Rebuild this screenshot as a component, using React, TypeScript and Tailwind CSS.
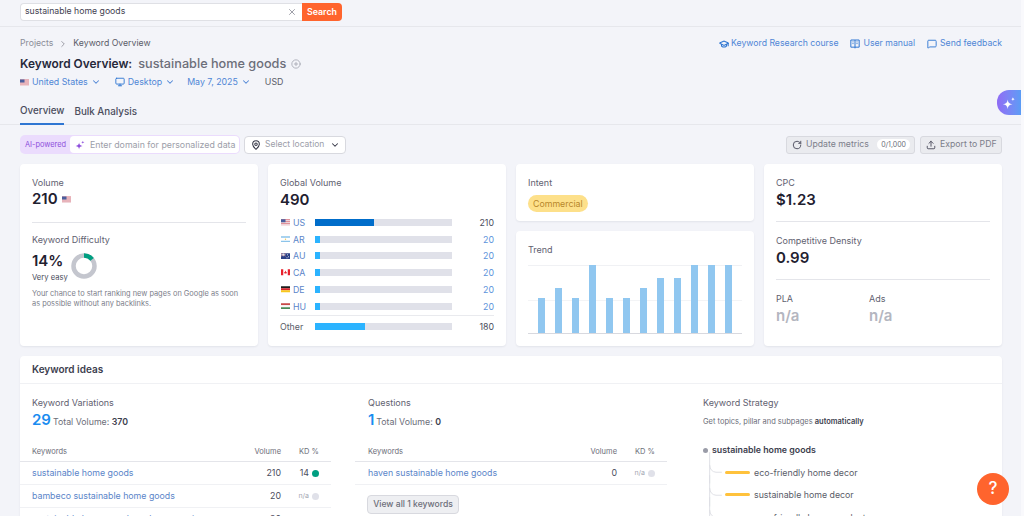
import { ChevronDown, ChevronRight, X, Monitor, MapPin, RotateCw, Upload, MessageSquare, GraduationCap, CirclePlus } from "lucide-react";

const Flag = ({ code, className = "w-[9px] h-[6px]" }: { code: string; className?: string }) => {
  if (code === "US")
    return (
      <svg viewBox="0 0 18 12" className={className}>
        <rect width="18" height="12" fill="#d9707c" />
        <rect y="2" width="18" height="2" fill="#f6f6f8" />
        <rect y="6" width="18" height="2" fill="#f6f6f8" />
        <rect y="10" width="18" height="2" fill="#f6f6f8" />
        <rect width="9" height="6" fill="#4a5f9e" />
      </svg>
    );
  if (code === "AR")
    return (
      <svg viewBox="0 0 18 12" className={className}>
        <rect width="18" height="12" fill="#8cc4ea" />
        <rect y="3" width="18" height="6" fill="#fff" />
        <circle cx="9" cy="6" r="1.4" fill="#f0c850" />
      </svg>
    );
  if (code === "AU")
    return (
      <svg viewBox="0 0 18 12" className={className}>
        <rect width="18" height="12" fill="#2a3f86" />
        <path d="M0 0L9 6M9 0L0 6" stroke="#d88" strokeWidth="1.4" />
        <path d="M4.5 0V6M0 3H9" stroke="#fff" strokeWidth="1.4" />
        <circle cx="13" cy="3" r="1" fill="#fff" />
        <circle cx="15" cy="7" r="1" fill="#fff" />
        <circle cx="12" cy="9" r="1" fill="#fff" />
      </svg>
    );
  if (code === "CA")
    return (
      <svg viewBox="0 0 18 12" className={className}>
        <rect width="18" height="12" fill="#fff" />
        <rect width="4.5" height="12" fill="#e8202c" />
        <rect x="13.5" width="4.5" height="12" fill="#e8202c" />
        <path d="M9 2.5L10.5 6L12 5.5L11 8.5H7L6 5.5L7.5 6Z" fill="#e8202c" />
      </svg>
    );
  if (code === "DE")
    return (
      <svg viewBox="0 0 18 12" className={className}>
        <rect width="18" height="4" fill="#1c1c1c" />
        <rect y="4" width="18" height="4" fill="#d8242c" />
        <rect y="8" width="18" height="4" fill="#f8c81c" />
      </svg>
    );
  return (
    <svg viewBox="0 0 18 12" className={className}>
      <rect width="18" height="4" fill="#c84a48" />
      <rect y="4" width="18" height="4" fill="#f8f8f8" />
      <rect y="8" width="18" height="4" fill="#4a8a58" />
    </svg>
  );
};

// big four point star with a small one at its top right
const Stars = ({ className, color }: { className: string; color: string }) => (
  <svg viewBox="0 0 16 16" className={className}>
    <path d="M6.5 4C7 7.5 8 8.7 12 9.5C8 10.3 7 11.5 6.5 15C6 11.5 5 10.3 1 9.5C5 8.7 6 7.5 6.5 4Z" fill={color} />
    <path d="M12.5 1C12.7 2.6 13.2 3.1 15 3.5C13.2 3.9 12.7 4.4 12.5 6C12.3 4.4 11.8 3.9 10 3.5C11.8 3.1 12.3 2.6 12.5 1Z" fill={color} />
  </svg>
);

const ManualIcon = () => (
  <svg viewBox="0 0 12 12" className="w-[10px] h-[10px] ml-[12px] mr-[3px]" fill="none" stroke="#2f76d2" strokeWidth="1.2">
    <path d="M1 1.2H11V9.8H1Z" />
    <path d="M6 1.2V11.2" />
    <path d="M2.8 3.5H4.4M2.8 5.5H4.4M7.6 3.5H9.2M7.6 5.5H9.2" strokeWidth="0.9" />
  </svg>
);

const countries = [
  { code: "US", pct: "w-[43%]", bar: "bg-[#006dca]", value: "210", valueClass: "text-[#4a4c5c]" },
  { code: "AR", pct: "w-[4%]", bar: "bg-[#2bb3ff]", value: "20", valueClass: "text-[#5b93db]" },
  { code: "AU", pct: "w-[4%]", bar: "bg-[#2bb3ff]", value: "20", valueClass: "text-[#5b93db]" },
  { code: "CA", pct: "w-[4%]", bar: "bg-[#2bb3ff]", value: "20", valueClass: "text-[#5b93db]" },
  { code: "DE", pct: "w-[4%]", bar: "bg-[#2bb3ff]", value: "20", valueClass: "text-[#5b93db]" },
  { code: "HU", pct: "w-[4%]", bar: "bg-[#2bb3ff]", value: "20", valueClass: "text-[#5b93db]" },
];

const trend = [
  "h-[35px]", "h-[45px]", "h-[35px]", "h-[68px]", "h-[35px]", "h-[35px]",
  "h-[45px]", "h-[55px]", "h-[55px]", "h-[68px]", "h-[68px]", "h-[68px]",
];

const Card = ({ className = "", children }: { className?: string; children: React.ReactNode }) => (
  <div className={`bg-white rounded-[4px] shadow-[0_1px_2px_rgba(30,40,70,0.08)] ${className}`}>{children}</div>
);

const Label = ({ children }: { children: React.ReactNode }) => (
  <div className="text-[9px] leading-[12px] text-[#5f6170]">{children}</div>
);

const KeywordTable = ({ indent, rows }: { indent: string; rows: { kw: string; vol: string; kd: string; dot: string }[] }) => (
  <div>
    <div className="flex items-center h-[19px] border-b-[1.5px] border-[#e4e5ea] text-[7.5px] text-[#6c6e79]">
      <span className={`${indent} flex-1`}>Keywords</span>
      <span className="w-[50px] text-right">Volume</span>
      <span className="w-[38px] text-right mr-[12px]">KD %</span>
    </div>
    {rows.map((row) => (
      <div key={row.kw} className="flex items-center h-[23px] border-b border-[#f0f1f4] text-[8.8px]">
        <span className={`${indent} flex-1 text-[#5b85c9] whitespace-nowrap`}>{row.kw}</span>
        <span className="w-[50px] text-right text-[#4a4c5c]">{row.vol}</span>
        <span className="w-[38px] mr-[12px] flex items-center justify-end gap-[3px]">
          <span className={row.kd === "n/a" ? "text-[7px] text-[#a5a7b2]" : "text-[8.8px] text-[#4a4c5c]"}>{row.kd}</span>
          <span className={`w-[7px] h-[7px] shrink-0 rounded-full ${row.dot}`} />
        </span>
      </div>
    ))}
  </div>
);

const BranchItem = ({ label }: { label: string }) => (
  <div className="flex items-center h-[22.5px]">
    <svg viewBox="0 0 17 23" className="w-[17px] h-[22.5px] ml-[5px] overflow-visible shrink-0" fill="none" stroke="#dcdde2" strokeWidth="0.9">
      <path d="M1.5 -9V23" />
      <path d="M1.5 4Q2 11 8 11.5H14" />
    </svg>
    <span className="w-[25px] h-[3px] rounded-full bg-[#ffc23c] mr-[4px]" />
    <span className="text-[8.8px] text-[#5a5c68] whitespace-nowrap">{label}</span>
  </div>
);

export default function App() {
  return (
    <div className="relative w-[1024px] h-[516px] overflow-hidden bg-[#f3f4f9] font-['Inter',sans-serif] text-[#1f2130]">
      {/* top search bar */}
      <div className="h-[27px] border-b border-[#e6e7ec] pl-5 pt-[3px]">
        <div className="flex w-[322px] h-[18px]">
          <div className="flex-1 flex items-center bg-white border border-[#dfe0e5] border-r-0 rounded-l-[4px] pl-[4px] pr-[5px]">
            <span className="flex-1 text-[8.7px] text-[#3f4150]">sustainable home goods</span>
            <X className="w-[10px] h-[10px] text-[#8b8d98]" />
          </div>
          <div className="w-[40px] flex items-center justify-center bg-[#ff642d] rounded-r-[4px] text-white text-[8.8px] font-semibold">
            Search
          </div>
        </div>
      </div>

      {/* page header */}
      <div className="h-[98px] border-b border-[#e6e7ec] pl-5 pr-[22px] flex flex-col relative">
        <div className="flex justify-between items-center mt-[11px] h-[12px]">
          <div className="flex items-center text-[8.7px] text-[#8b8d98]">
            <span>Projects</span>
            <ChevronRight className="w-[10px] h-[10px] mx-[5px] text-[#8b8d98]" />
            <span className="text-[#5a5c68]">Keyword Overview</span>
          </div>
          <div className="flex items-center text-[8.7px] text-[#4f86d6]">
            <GraduationCap strokeWidth={2.5} className="w-[10px] h-[10px] mr-[2px] text-[#2f76d2]" />
            <span>Keyword Research course</span>
            <ManualIcon />
            <span>User manual</span>
            <MessageSquare strokeWidth={2.2} className="w-[10px] h-[10px] ml-[12px] mr-[3px] text-[#2f76d2]" />
            <span>Send feedback</span>
          </div>
        </div>
        <div className="flex items-center mt-[6px] h-[16px]">
          <span className="text-[11.9px] font-semibold text-[#26283a]">Keyword Overview:</span>
          <span className="ml-[6px] text-[12.7px] font-medium text-[#6c6e79]">sustainable home goods</span>
          <CirclePlus className="ml-[5px] w-[10px] h-[10px] text-[#a5a7b2]" />
        </div>
        <div className="flex items-center mt-[4px] h-[12px] text-[8.8px] text-[#4f86d6]">
          <Flag code="US" className="w-[9px] h-[7px] mr-[3px]" />
          <span>United States</span>
          <ChevronDown strokeWidth={2.5} className="w-[10px] h-[10px] ml-[3px]" />
          <Monitor strokeWidth={2.2} className="w-[10px] h-[10px] ml-[14px] mr-[3px] text-[#2f76d2]" />
          <span>Desktop</span>
          <ChevronDown strokeWidth={2.5} className="w-[10px] h-[10px] ml-[3px]" />
          <span className="ml-[12px]">May 7, 2025</span>
          <ChevronDown strokeWidth={2.5} className="w-[10px] h-[10px] ml-[3px]" />
          <span className="ml-[14px] text-[#5a5c68]">USD</span>
        </div>
        <div className="flex mt-auto h-[24px] text-[9.8px] font-medium text-[#4a4c5c]">
          <div className="flex items-center h-[25px] border-b-2 border-[#2f76d2]">Overview</div>
          <div className="flex items-center h-[24px] ml-[10px]">Bulk Analysis</div>
        </div>
      </div>

      {/* AI side tab */}
      <div className="absolute right-[3px] top-[90px] w-[24px] h-[25px] rounded-l-[12px] bg-gradient-to-r from-[#8f6bf5] to-[#5a9cf5] flex items-center justify-center">
        <Stars className="w-[14px] h-[14px]" color="#ffffff" />
      </div>
      {/* lighter strip on the right edge */}
      <div className="absolute right-0 top-0 bottom-0 w-[3px] bg-[#f9f9fc]" />

      {/* toolbar */}
      <div className="flex items-center justify-between pl-5 pr-[22px] mt-[10px] h-[19px]">
        <div className="flex items-center">
          <div className="flex items-center h-[19px] bg-[#ebdcfd] rounded-[5px] pl-[5px] pr-[1px]">
            <span className="text-[7.4px] text-[#8e4fdc] mr-[4px] whitespace-nowrap">AI-powered</span>
            <div className="flex items-center w-[169px] h-[17px] bg-white rounded-[4px] pl-[5px]">
              <Stars className="w-[10px] h-[10px] mr-[5px]" color="#8e4fdc" />
              <span className="text-[8.8px] text-[#9c9ea9] whitespace-nowrap">Enter domain for personalized data</span>
            </div>
          </div>
          <div className="flex items-center ml-[4px] w-[102px] h-[18px] bg-white border border-[#d8d9df] rounded-[4px] pl-[6px]">
            <MapPin strokeWidth={2.5} className="w-[10px] h-[10px] text-[#333545]" />
            <span className="text-[8.5px] text-[#9c9ea9] ml-[4px] flex-1">Select location</span>
            <ChevronDown strokeWidth={2.5} className="w-[10px] h-[10px] text-[#333545] mr-[5px]" />
          </div>
        </div>
        <div className="flex items-center text-[8.7px] text-[#7c7e8a]">
          <div className="flex items-center h-[18px] w-[129px] bg-[#eaebef] border border-[#d8d9df] rounded-[3px] pl-[5px]">
            <RotateCw strokeWidth={2.2} className="w-[10px] h-[10px] text-[#4a4c5c] mr-[4px]" />
            <span className="flex-1">Update metrics</span>
            <span className="bg-white rounded-full h-[11px] px-[4px] text-[7px] leading-[11px] mr-[4px] text-[#6c6e79]">0/1,000</span>
          </div>
          <div className="flex items-center h-[18px] w-[82px] ml-[5px] bg-[#eaebef] border border-[#d8d9df] rounded-[3px] pl-[5px]">
            <Upload strokeWidth={2.2} className="w-[10px] h-[10px] text-[#4a4c5c] mr-[4px]" />
            <span>Export to PDF</span>
          </div>
        </div>
      </div>

      {/* metric cards */}
      <div className="grid grid-cols-[238px_238px_238px_238px] gap-[10px] px-5 mt-[10px] h-[182px]">
        <Card className="px-3 pt-[13px]">
          <Label>Volume</Label>
          <div className="flex items-center mt-[2px] h-[17px]">
            <span className="text-[15px] font-semibold">210</span>
            <Flag code="US" className="w-[9px] h-[7px] ml-[4px]" />
          </div>
          <div className="h-px bg-[#e4e5ea] mt-[14px]" />
          <div className="mt-[11px]"><Label>Keyword Difficulty</Label></div>
          <div className="flex items-start mt-[5px]">
            <div>
              <div className="text-[15px] leading-[19px] font-semibold">14%</div>
              <div className="text-[7.6px] leading-[10px] text-[#4a4c5c] mt-[3px]">Very easy</div>
            </div>
            <svg viewBox="0 0 26 26" className="w-[26px] h-[26px] ml-[3px] mt-[2px]">
              <circle cx="13" cy="13" r="10.5" fill="none" stroke="#c4c6ce" strokeWidth="4.5" />
              <circle cx="13" cy="13" r="10.5" fill="none" stroke="#009f81" strokeWidth="4.5" strokeDasharray="9.2 57" transform="rotate(-90 13 13)" />
            </svg>
          </div>
          <p className="text-[7.4px] leading-[10px] text-[#7c7e8a] mt-[6px]">
            Your chance to start ranking new pages on Google as soon as possible without any backlinks.
          </p>
        </Card>

        <Card className="px-3 pt-[13px]">
          <Label>Global Volume</Label>
          <div className="text-[15px] font-semibold leading-[19px] mt-[1px]">490</div>
          <div className="mt-[5px]">
            {countries.map((c) => (
              <div key={c.code} className="flex items-center h-[16.75px]">
                <Flag code={c.code} className="w-[9px] h-[6.5px] ml-[1px]" />
                <span className="w-[22px] ml-[3px] text-[8.8px] text-[#5b85c9]">{c.code}</span>
                <div className="w-[137px] h-[7px] bg-[#e0e1e9]">
                  <div className={`h-full ${c.pct} ${c.bar}`} />
                </div>
                <span className={`flex-1 text-right text-[8.8px] ${c.valueClass}`}>{c.value}</span>
              </div>
            ))}
          </div>
          <div className="h-px bg-[#e9eaee]" />
          <div className="flex items-center h-[22px]">
            <span className="w-[35px] text-[8.8px] text-[#5a5c68]">Other</span>
            <div className="w-[137px] h-[7px] bg-[#e0e1e9]">
              <div className="h-full w-[36.5%] bg-[#2bb3ff]" />
            </div>
            <span className="flex-1 text-right text-[8.8px] text-[#4a4c5c]">180</span>
          </div>
        </Card>

        <div className="flex flex-col gap-[10px]">
          <Card className="h-[57px] px-3 pt-[13px]">
            <Label>Intent</Label>
            <span className="inline-flex items-center h-[17px] px-[5px] rounded-full bg-[#fde08a] text-[8.8px] text-[#b8872a] mt-[1px]">Commercial</span>
          </Card>
          <Card className="flex-1 px-3 pt-[13px]">
            <Label>Trend</Label>
            <div className="relative h-[69px] mt-[9px] border-b border-[#d8d9df] border-t-[#f0f1f4] border-t">
              <div className="absolute left-0 right-0 top-[34px] h-px bg-[#f3f4f6]" />
              <div className="absolute inset-x-[10px] bottom-0 flex items-end justify-between">
                {trend.map((h, i) => (
                  <div key={i} className={`w-[7px] ${h} bg-[#90c7f0]`} />
                ))}
              </div>
            </div>
          </Card>
        </div>

        <Card className="px-3 pt-[13px]">
          <Label>CPC</Label>
          <div className="text-[15px] font-semibold leading-[19px] mt-[1px]">$1.23</div>
          <div className="h-px bg-[#e4e5ea] mt-[12px]" />
          <div className="mt-[13px]"><Label>Competitive Density</Label></div>
          <div className="text-[15px] font-semibold leading-[19px] mt-[1px]">0.99</div>
          <div className="h-px bg-[#e4e5ea] mt-[12px]" />
          <div className="flex mt-[13px]">
            <div className="w-[93px]">
              <Label>PLA</Label>
              <div className="text-[15px] font-semibold leading-[19px] mt-[1px] text-[#b4b6c0]">n/a</div>
            </div>
            <div>
              <Label>Ads</Label>
              <div className="text-[15px] font-semibold leading-[19px] mt-[1px] text-[#b4b6c0]">n/a</div>
            </div>
          </div>
        </Card>
      </div>

      {/* keyword ideas */}
      <Card className="ml-5 w-[982px] mt-[10px] h-[200px]">
        <div className="h-[28px] flex items-center px-3 border-b border-[#f0f1f4] text-[10px] font-semibold text-[#3c3e4e]">
          Keyword ideas
        </div>
        <div className="grid grid-cols-[311px_312px_1fr] gap-[24px] pt-[13px]">
          <div>
            <div className="pl-3"><Label>Keyword Variations</Label></div>
            <div className="flex items-baseline pl-3 h-[20px]">
              <span className="text-[15px] font-semibold text-[#1a8cf0]">29</span>
              <span className="ml-[2px] text-[8.8px] text-[#6c6e79]">Total Volume: <b className="font-semibold text-[#3c3e4e]">370</b></span>
            </div>
            <div className="mt-[14px]">
              <KeywordTable
                indent="ml-3"
                rows={[
                  { kw: "sustainable home goods", vol: "210", kd: "14", dot: "bg-[#009f81]" },
                  { kw: "bambeco sustainable home goods", vol: "20", kd: "n/a", dot: "bg-[#e0e1e9]" },
                  { kw: "sustainable home goods and accessories", vol: "20", kd: "n/a", dot: "bg-[#e0e1e9]" },
                ]}
              />
            </div>
          </div>
          <div>
            <div className="pl-[13px]"><Label>Questions</Label></div>
            <div className="flex items-baseline pl-[13px] h-[20px]">
              <span className="text-[15px] font-semibold text-[#1a8cf0]">1</span>
              <span className="ml-[2px] text-[8.8px] text-[#6c6e79]">Total Volume: <b className="font-semibold text-[#3c3e4e]">0</b></span>
            </div>
            <div className="mt-[14px]">
              <KeywordTable indent="ml-[13px]" rows={[{ kw: "haven sustainable home goods", vol: "0", kd: "n/a", dot: "bg-[#e0e1e9]" }]} />
            </div>
            <div className="ml-3 mt-[10px] inline-flex items-center justify-center h-[19px] w-[92px] bg-[#eeeff2] border border-[#d8d9df] rounded-[4px] text-[8.6px] font-medium text-[#6c6e79]">
              View all 1 keywords
            </div>
          </div>
          <div className="pl-3">
            <Label>Keyword Strategy</Label>
            <div className="text-[7.5px] text-[#6c6e79] h-[20px] mt-[3px] flex items-center">
              <span>Get topics, pillar and subpages <b className="font-semibold text-[#3c3e4e]">automatically</b></span>
            </div>
            <div className="flex items-center mt-[10px] h-[16px]">
              <span className="w-[5px] h-[5px] rounded-full bg-[#9a9ca8] mr-[4px]" />
              <span className="text-[8.8px] font-semibold text-[#3c3e4e]">sustainable home goods</span>
            </div>
            <div className="mt-[3px]">
              <BranchItem label="eco-friendly home decor" />
              <BranchItem label="sustainable home decor" />
              <BranchItem label="eco-friendly home products" />
            </div>
          </div>
        </div>
      </Card>

      {/* help button */}
      <div className="absolute left-[977px] top-[473px] w-[32px] h-[32px] rounded-full bg-[#ff642d] flex items-center justify-center text-white text-[17px] font-medium">
        ?
      </div>
    </div>
  );
}
